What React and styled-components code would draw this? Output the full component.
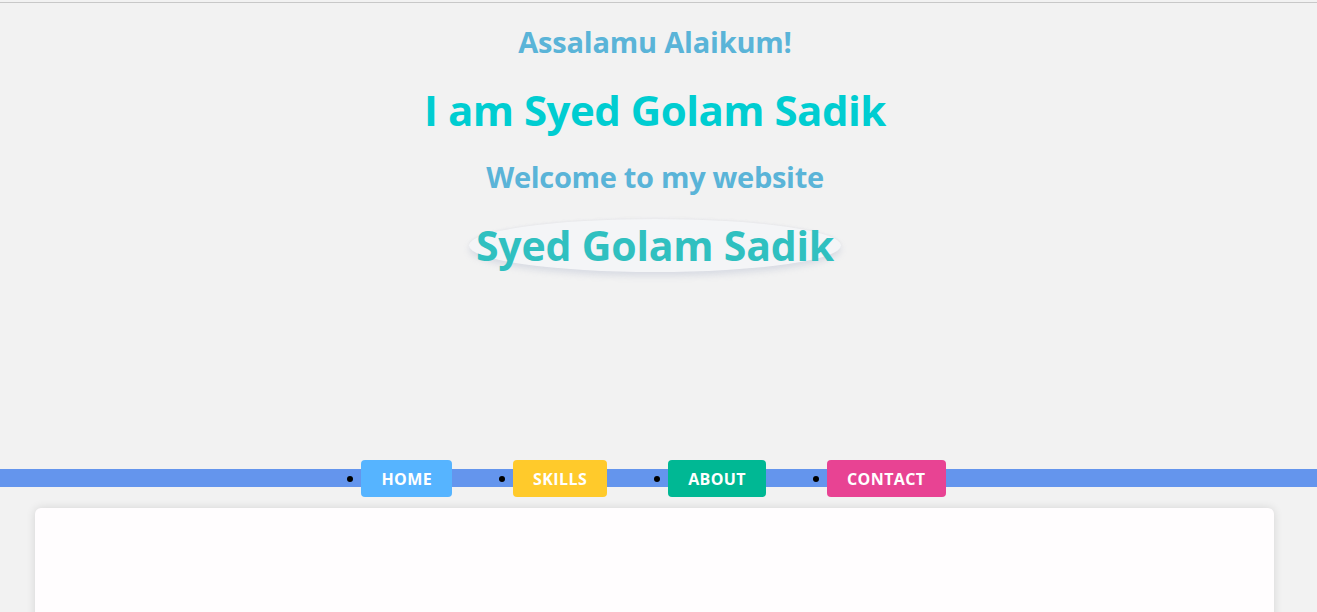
import React from "react";
import styled, { createGlobalStyle } from "styled-components";

const Global = createGlobalStyle`
  html, body { margin: 0; padding: 0; background: #f2f2f2; }
  body { font-family: "Open Sans", "Noto Sans", sans-serif; }
`;

const Page = styled.div`
  margin-top: 2px;
  border-top: 1px solid #c8c8c8;
  min-height: 609px;
  background: #f2f2f2;
  overflow: hidden;
`;

const Hero = styled.header`
  display: flex;
  flex-direction: column;
  align-items: center;
  height: 457px;
  padding-right: 7px;
`;

const Heading = styled.div`
  font-weight: 700;
  color: ${(p) => p.$color};
  font-size: ${(p) => p.$size}px;
  line-height: ${(p) => p.$lh}px;
  margin-top: ${(p) => p.$mt}px;
  letter-spacing: ${(p) => p.$ls || 0}px;
  white-space: nowrap;
`;

const Oval = styled.div`
  margin-top: 25px;
  width: 372px;
  height: 53px;
  display: flex;
  align-items: center;
  justify-content: center;
  border-radius: 50%;
  background: #f4f5f7;
  box-shadow: 0 4px 6px rgba(150, 160, 190, 0.28), 0 -1px 2px rgba(180, 185, 200, 0.12);
`;

const NavBar = styled.nav`
  position: relative;
  height: 37px;
  display: flex;
  align-items: center;
  justify-content: center;
  padding-right: 24px;
`;

const Stripe = styled.div`
  position: absolute;
  left: 0;
  right: 0;
  top: 9px;
  height: 18px;
  background: #6495ed;
`;

const NavList = styled.ul`
  position: relative;
  display: flex;
  gap: 47px;
  margin: 0;
  padding: 0;
  list-style: none;
`;

const NavItem = styled.li`
  display: flex;
  align-items: center;
  gap: 8px;
  &::before {
    content: "";
    width: 6px;
    height: 6px;
    border-radius: 50%;
    background: #000;
  }
`;

const NavButton = styled.a`
  display: flex;
  align-items: center;
  height: 37px;
  padding: 0 20px;
  border-radius: 4px;
  background: ${(p) => p.$bg};
  color: #fff;
  font-size: 16px;
  font-weight: 700;
  letter-spacing: 0.4px;
  text-decoration: none;
  box-sizing: border-box;
`;

const Card = styled.main`
  margin: 11px 43px 0 35px;
  height: 200px;
  background: #fffdfe;
  border-radius: 6px;
  box-shadow: 0 0 10px rgba(0, 0, 0, 0.12);
`;

const links = [
  { label: "HOME", bg: "#56b4ff" },
  { label: "SKILLS", bg: "#ffca2b" },
  { label: "ABOUT", bg: "#00b894" },
  { label: "CONTACT", bg: "#e84393" },
];

export default function App() {
  return (
    <>
      <Global />
      <Page>
        <Hero>
          <Heading $color="#5ab4d8" $size={29} $lh={34} $mt={22} $ls={-0.2}>
            Assalamu Alaikum!
          </Heading>
          <Heading $color="#00cdd1" $size={42} $lh={50} $mt={26} $ls={-0.5}>
            I am Syed Golam Sadik
          </Heading>
          <Heading $color="#5ab4d8" $size={29} $lh={34} $mt={25} $ls={-0.3}>
            Welcome to my website
          </Heading>
          <Oval>
            <Heading $color="#30c0c0" $size={41} $lh={53} $mt={0} $ls={-0.2}>
              Syed Golam Sadik
            </Heading>
          </Oval>
        </Hero>
        <NavBar>
          <Stripe />
          <NavList>
            {links.map((l) => (
              <NavItem key={l.label}>
                <NavButton href="#" $bg={l.bg}>
                  {l.label}
                </NavButton>
              </NavItem>
            ))}
          </NavList>
        </NavBar>
        <Card />
      </Page>
    </>
  );
}
